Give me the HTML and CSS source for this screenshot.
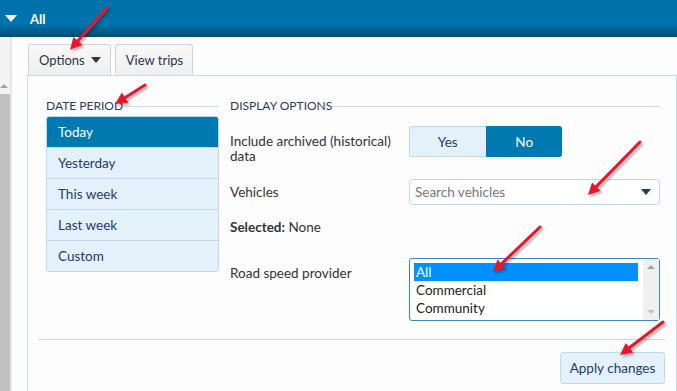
FILE: index.html
```html
<!DOCTYPE html>
<html lang="en">

<head>
  <meta charset="UTF-8" />
  <meta name="viewport" content="width=device-width, initial-scale=1.0" />
  <title>Trip options</title>
  <link rel="stylesheet" href="styles.css">
</head>

<body>
  <header class="topbar">
    <span class="topbar-caret"></span>
    <span class="topbar-title">All</span>
  </header>

  <div class="page">
    <div class="scrollbar">
      <span class="scroll-up"></span>
      <div class="scroll-thumb"></div>
    </div>

    <main class="content">
      <div class="toolbar">
        <button class="btn btn-options">Options <span class="caret"></span></button>
        <button class="btn">View trips</button>
      </div>

      <section class="panel">
        <div class="panel-body">
          <div class="col-date">
            <div class="group-title"><span>Date period</span></div>
            <ul class="period-list">
              <li class="active">Today</li>
              <li>Yesterday</li>
              <li>This week</li>
              <li>Last week</li>
              <li>Custom</li>
            </ul>
          </div>

          <div class="col-display">
            <div class="group-title"><span>Display options</span></div>

            <div class="form-row row-archived">
              <label class="form-label">Include archived (historical) data</label>
              <div class="toggle">
                <span class="toggle-opt">Yes</span>
                <span class="toggle-opt on">No</span>
              </div>
            </div>

            <div class="form-row row-vehicles">
              <label class="form-label">Vehicles</label>
              <div class="search">
                <span class="search-placeholder">Search vehicles</span>
                <span class="search-caret"></span>
              </div>
            </div>

            <p class="selected"><b>Selected:</b> None</p>

            <div class="form-row row-provider">
              <label class="form-label">Road speed provider</label>
              <div class="listbox">
                <ul class="listbox-options">
                  <li class="picked">All</li>
                  <li>Commercial</li>
                  <li>Community</li>
                </ul>
                <div class="listbox-scroll">
                  <span class="arrow-up"></span>
                  <span class="arrow-down"></span>
                </div>
              </div>
            </div>
          </div>
        </div>

        <div class="panel-footer">
          <button class="btn-apply">Apply changes</button>
        </div>
      </section>
    </main>
  </div>

  <svg class="annotations" width="677" height="391" viewBox="0 0 677 391">
    <defs>
      <marker id="head" markerWidth="4" markerHeight="4" refX="1" refY="2" orient="auto" markerUnits="strokeWidth">
        <path d="M0,0 L4,2 L0,4 z" fill="#e8162b" />
      </marker>
    </defs>
    <g stroke="#e8162b" stroke-width="3" stroke-linecap="round" marker-end="url(#head)">
      <line x1="107" y1="8" x2="76" y2="43" />
      <line x1="145" y1="85" x2="122.6" y2="99.2" />
      <line x1="640" y1="142" x2="594.3" y2="188.6" />
      <line x1="540" y1="227" x2="499.5" y2="265.8" />
      <line x1="663" y1="322" x2="627.1" y2="349.5" />
    </g>
  </svg>
</body>

</html>
```

FILE: styles.css
```css
* {
  margin: 0;
  padding: 0;
  box-sizing: border-box;
}

body {
  width: 677px;
  height: 391px;
  overflow: hidden;
  font-family: Lato, "Open Sans", sans-serif;
  font-size: 13px;
  color: #333;
  background: #fdfdfd;
}

ul {
  list-style: none;
}

button {
  font: inherit;
  cursor: pointer;
}

/* top bar */

.topbar {
  height: 37px;
  display: flex;
  align-items: center;
  gap: 13px;
  padding-left: 5px;
  background: linear-gradient(#0071aa, #0073ad 65%, #005a88 88%, #004c73);
}

.topbar-caret {
  width: 0;
  height: 0;
  border-left: 6px solid transparent;
  border-right: 6px solid transparent;
  border-top: 7px solid #fff;
}

.topbar-title {
  color: #fff;
  font-weight: 700;
  font-size: 13px;
}

/* page */

.page {
  display: flex;
  height: 354px;
}

.scrollbar {
  width: 12px;
  display: flex;
  flex-direction: column;
  align-items: center;
  background: #f4f4f4;
  border-right: 2px solid #e6e6e6;
  padding-top: 47px;
}

.scroll-up {
  width: 0;
  height: 0;
  border-left: 4px solid transparent;
  border-right: 4px solid transparent;
  border-bottom: 4px solid #a3a3a3;
  margin-left: -2px;
}

.scroll-thumb {
  align-self: stretch;
  flex: 1;
  margin-top: 6px;
  background: #c1c1c1;
}

.content {
  flex: 1;
  padding-left: 15px;
}

.toolbar {
  display: flex;
  gap: 4px;
  margin-top: 7px;
  padding-left: 1px;
}

.btn {
  height: 31px;
  padding: 0 9px 0 10px;
  display: flex;
  align-items: center;
  gap: 6px;
  font-size: 13px;
  color: #2c3547;
  background: linear-gradient(#f8f8f8, #efefef);
  border: 1px solid #d3d3d3;
  border-bottom: none;
  border-radius: 3px 3px 0 0;
}

.caret {
  width: 0;
  height: 0;
  border-left: 5px solid transparent;
  border-right: 5px solid transparent;
  border-top: 6px solid #333;
}

/* options panel */

.panel {
  height: 317px;
  border: 1px solid #c4dbe9;
  border-bottom: none;
  background: #fdfdfd;
}

.panel-body {
  display: flex;
  gap: 11px;
  padding: 21px 16px 0 18px;
}

.col-date {
  width: 173px;
}

.col-display {
  flex: 1;
}

.group-title {
  display: flex;
  align-items: center;
  height: 16px;
  font-size: 12px;
  text-transform: uppercase;
  color: #2a3d5c;
}

.group-title::after {
  content: "";
  flex: 1;
  border-top: 1px solid #c4dbe9;
  margin-top: 2px;
}

.period-list {
  margin-top: 3px;
  border: 1px solid #bcd9ed;
  border-radius: 3px;
  background: #e4f1fb;
  overflow: hidden;
}

.period-list li {
  height: 31px;
  display: flex;
  align-items: center;
  padding-left: 11px;
  font-size: 13.5px;
  color: #1d3c6a;
  border-top: 1px solid #bcd9ed;
}

.period-list li:first-child {
  border-top: none;
  height: 30px;
}

.period-list li.active {
  background: #0079b0;
  color: #fff;
}

/* display options rows */

.form-row {
  display: grid;
  grid-template-columns: 179px 251px;
}

.form-label {
  font-size: 13.5px;
  color: #333;
  line-height: 15px;
}

.row-archived {
  margin-top: 13px;
}

.row-archived .form-label {
  padding-top: 8px;
}

.toggle {
  display: flex;
  width: 153px;
  height: 31px;
}

.toggle-opt {
  flex: 1;
  display: flex;
  align-items: center;
  justify-content: center;
  font-size: 13.5px;
  color: #1d3c6a;
  background: #e4f1fb;
  border: 1px solid #bcd9ed;
  border-right: none;
  border-radius: 3px 0 0 3px;
}

.toggle-opt.on {
  background: #0079b0;
  border-color: #0079b0;
  color: #fff;
  border-radius: 0 3px 3px 0;
}

.row-vehicles {
  margin-top: 15px;
  align-items: center;
}

.search {
  height: 26px;
  display: flex;
  align-items: center;
  justify-content: space-between;
  padding: 0 8px 0 5px;
  border: 1px solid #bcd9ed;
  border-radius: 4px;
  background: #fff;
}

.search-placeholder {
  font-size: 13.5px;
  color: #777;
}

.search-caret {
  width: 0;
  height: 0;
  border-left: 5px solid transparent;
  border-right: 5px solid transparent;
  border-top: 6px solid #1d3c6a;
}

.selected {
  margin-top: 14px;
  line-height: 17px;
  font-size: 13.5px;
  color: #333;
}

.selected b {
  font-weight: 700;
}

.row-provider {
  margin-top: 22px;
}

.row-provider .form-label {
  padding-top: 8px;
}

.listbox {
  height: 63px;
  display: flex;
  padding: 4px 0 4px 4px;
  border: 1px solid #3b84bf;
  border-radius: 3px;
  background: #fff;
}

.listbox-options {
  flex: 1;
  margin-right: 5px;
}

.listbox-options li {
  height: 18px;
  line-height: 18px;
  padding-left: 2px;
  font-size: 13.5px;
  color: #222;
}

.listbox-options li.picked {
  background: #0090ff;
  color: #fff;
}

.listbox-scroll {
  width: 16px;
  margin: -4px 0;
  display: flex;
  flex-direction: column;
  justify-content: space-between;
  align-items: center;
  padding: 6px 0;
  background: #f0f0f0;
}

.arrow-up,
.arrow-down {
  width: 0;
  height: 0;
  border-left: 4px solid transparent;
  border-right: 4px solid transparent;
}

.arrow-up {
  border-bottom: 4px solid #a3a3a3;
}

.arrow-down {
  border-top: 4px solid #c3c3c3;
}

/* footer */

.panel-footer {
  margin: 18px 11px 0 10px;
  padding-top: 12px;
  border-top: 1px solid #c4dbe9;
  display: flex;
  justify-content: flex-end;
}

.btn-apply {
  height: 32px;
  width: 105px;
  font-size: 13.5px;
  color: #1d3c6a;
  background: #e4f1fb;
  border: 1px solid #bcd9ed;
  border-radius: 3px;
}

/* red callout arrows drawn over the screenshot */

.annotations {
  position: absolute;
  top: 0;
  left: 0;
  pointer-events: none;
  filter: drop-shadow(2px 2px 1px rgba(0, 0, 0, 0.3));
}
```
